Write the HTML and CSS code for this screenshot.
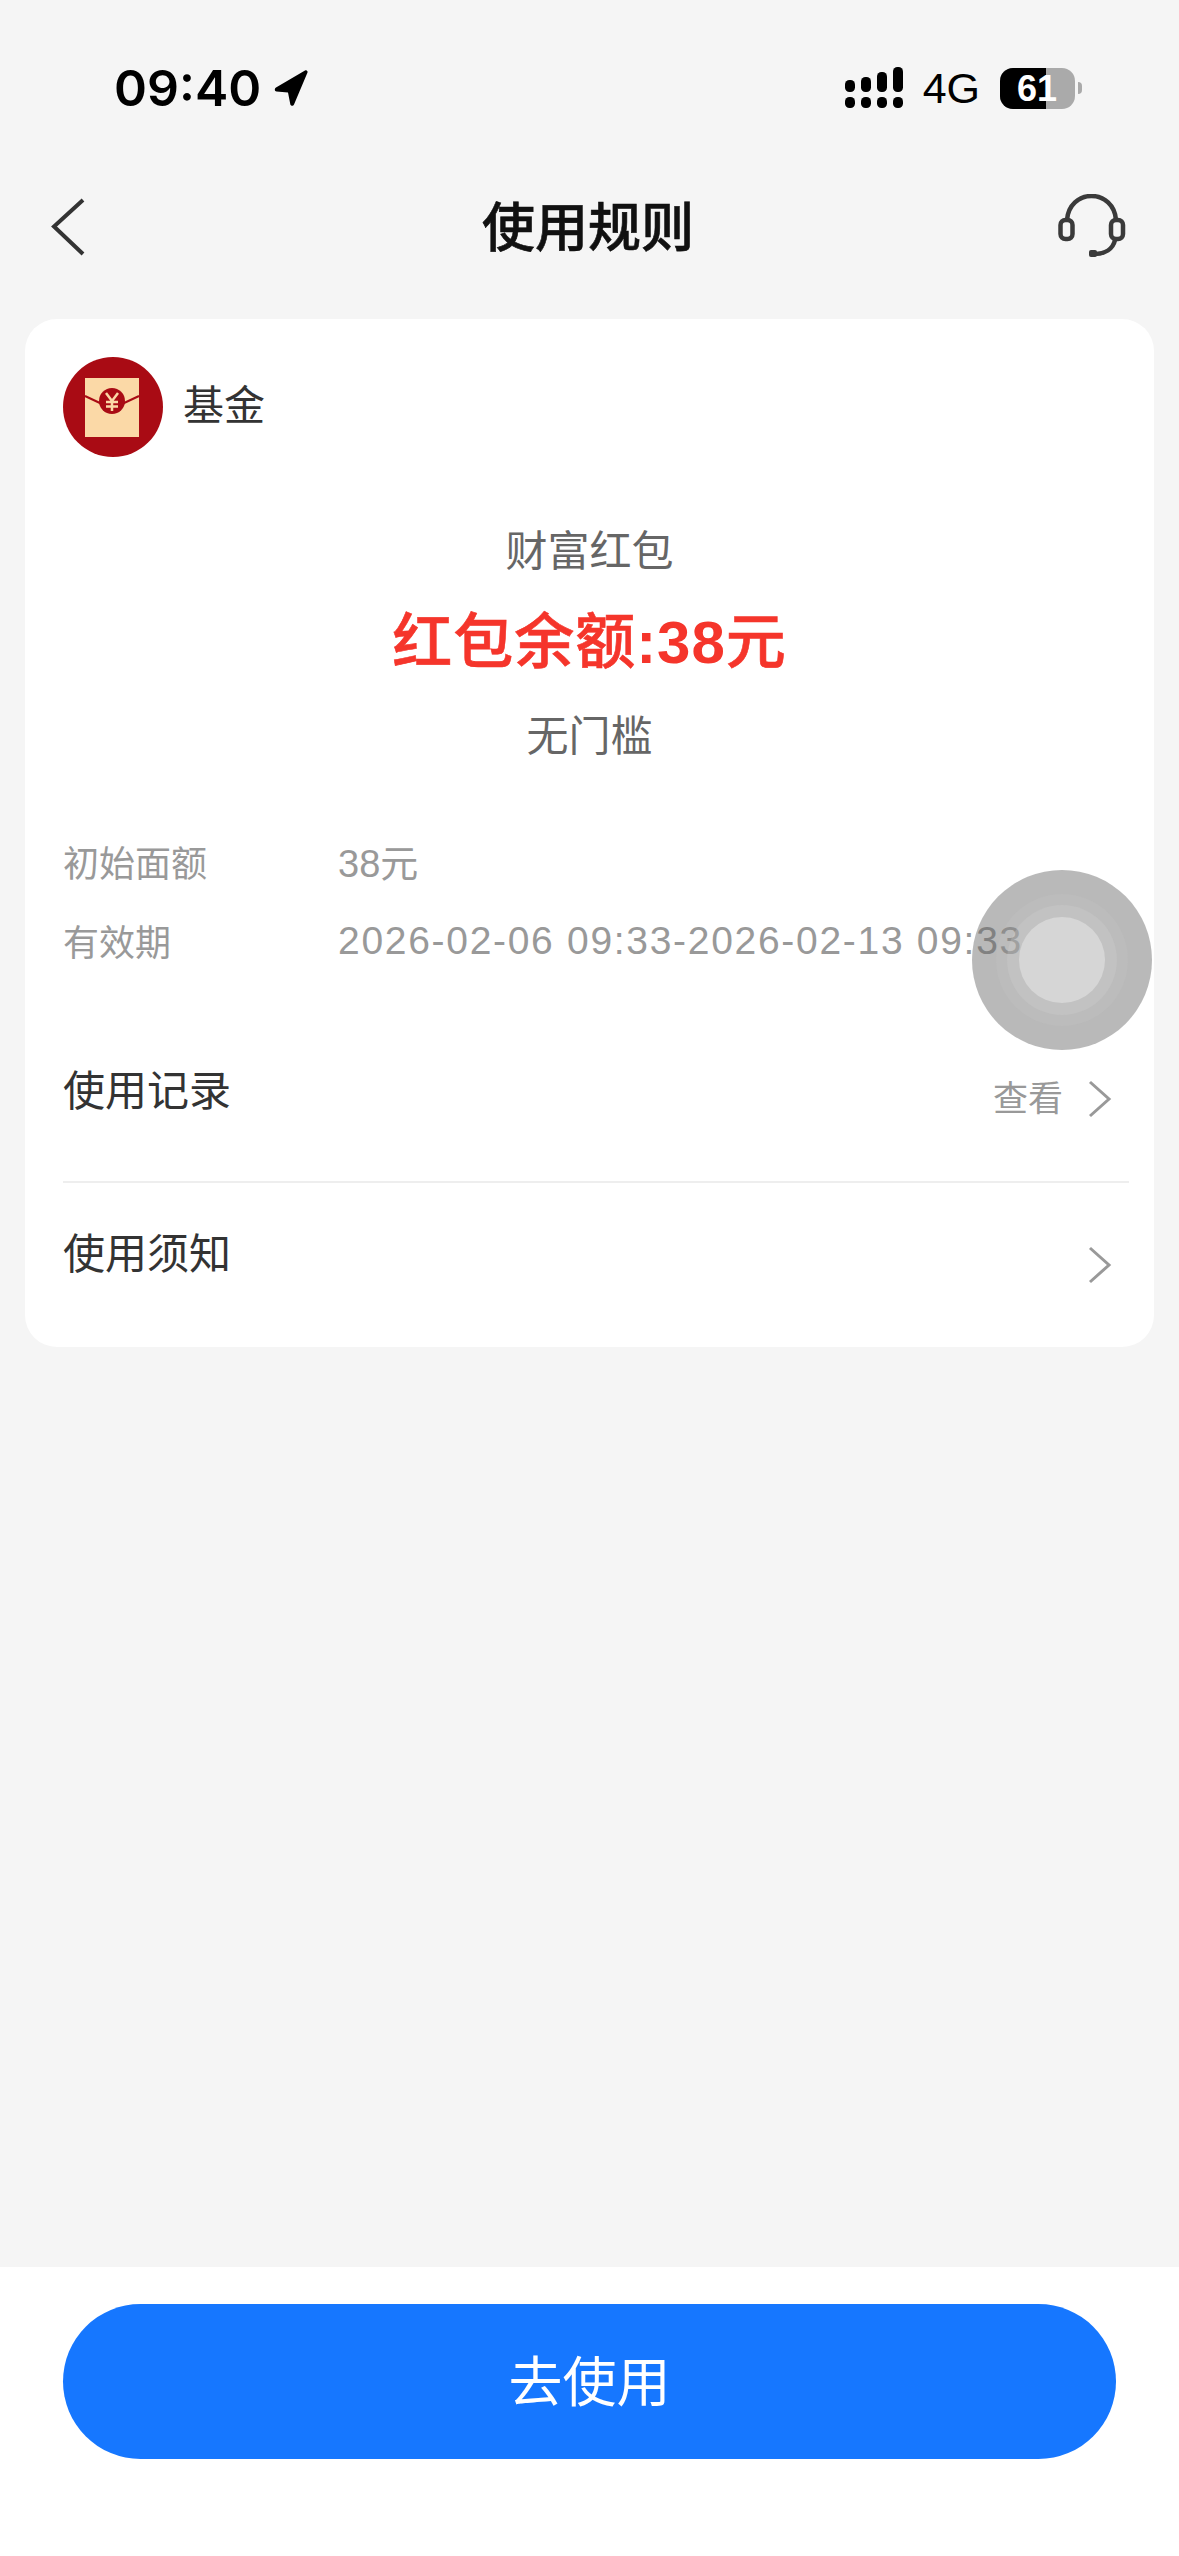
FILE: index.html
```html
<!DOCTYPE html>
<html lang="zh-CN">
<head>
    <meta charset="UTF-8">
    <meta name="viewport" content="width=device-width, initial-scale=1.0">
    <title>使用规则</title>
    <link rel="stylesheet" href="styles.css">
</head>
<body>
    <div class="page">
        <div class="status-bar">
            <div class="status-left">
                <span class="time">09:40</span>
                <svg class="loc-icon" width="36" height="40" viewBox="0 0 36 40">
                    <path d="M3 19.500 32 2.500c1.500-.8 3 .4 2.500 2L21 36.500c-.7 1.800-3.300 1.700-3.700-.2L15 24.500 3.500 23.500c-2-.2-2.300-3-.5-4z" fill="#000"/>
                </svg>
            </div>
            <div class="status-right">
                <svg class="signal-icon" width="58" height="42" viewBox="0 0 58 42">
                    <g fill="#000">
                        <rect x="0" y="13" width="10" height="12" rx="4.500"/>
                        <rect x="16" y="10" width="10" height="15" rx="4.500"/>
                        <rect x="32" y="5" width="10" height="20" rx="4.500"/>
                        <rect x="48" y="0" width="10" height="25" rx="4.500"/>
                        <rect x="0" y="30" width="10" height="11" rx="4.500"/>
                        <rect x="16" y="30" width="10" height="11" rx="4.500"/>
                        <rect x="32" y="30" width="10" height="11" rx="4.500"/>
                        <rect x="48" y="30" width="10" height="11" rx="4.500"/>
                    </g>
                </svg>
                <span class="net">4G</span>
                <div class="battery">
                    <div class="battery-body">
                        <div class="battery-fill"></div>
                        <span class="battery-num">61</span>
                    </div>
                    <div class="battery-cap"></div>
                </div>
            </div>
        </div>

        <div class="nav">
            <div class="nav-side">
                <svg class="back-icon" width="36" height="58" viewBox="0 0 36 58">
                    <path d="M33 2 4 28.500 33 56" fill="none" stroke="#333" stroke-width="4"/>
                </svg>
            </div>
            <div class="nav-title">使用规则</div>
            <div class="nav-side nav-side-right">
                <svg class="service-icon" width="68" height="66" viewBox="0 0 68 66">
                    <g fill="none" stroke="#3a3a3a" stroke-width="4.500">
                        <path d="M9 26C10 11 21 2 33.500 2S57 11 58 26"/>
                        <rect x="2.500" y="26" width="12" height="19" rx="5"/>
                        <rect x="53" y="26" width="12" height="19" rx="5"/>
                        <path d="M57 46c-2 9-10 14-21 14"/>
                    </g>
                    <rect x="31" y="56" width="8" height="7" rx="2" fill="#3a3a3a"/>
                </svg>
            </div>
        </div>

        <div class="card">
            <div class="product">
                <svg class="product-icon" width="100" height="100" viewBox="0 0 100 100">
                    <circle cx="50" cy="50" r="50" fill="#a90b14"/>
                    <rect x="22" y="21" width="54" height="59" fill="#fbd9a7"/>
                    <path d="M22 39 39 47M76 39 59 47" stroke="#a90b14" stroke-width="2" fill="none"/>
                    <circle cx="49" cy="44" r="13" fill="#a90b14"/>
                    <path d="M43 36 49 44 55 36M49 44V54M43 45H55M43 49.500H55" stroke="#fbd9a7" stroke-width="2.500" fill="none"/>
                </svg>
                <span class="product-name">基金</span>
            </div>

            <div class="summary">
                <div class="summary-type">财富红包</div>
                <div class="summary-amount">红包余额<span class="amount-num">:38</span>元</div>
                <div class="summary-limit">无门槛</div>
            </div>

            <div class="info">
                <div class="info-row">
                    <span class="info-label">初始面额</span>
                    <span class="info-value">38元</span>
                </div>
                <div class="info-row">
                    <span class="info-label">有效期</span>
                    <span class="info-value info-date">2026-02-06 09:33-2026-02-13 09:33</span>
                </div>
            </div>

            <div class="link-row link-row-first">
                <span class="link-title">使用记录</span>
                <div class="link-right">
                    <span class="link-hint">查看</span>
                    <svg class="chevron" width="24" height="38" viewBox="0 0 24 38">
                        <path d="M2 2 21 19 2 36" fill="none" stroke="#999" stroke-width="3"/>
                    </svg>
                </div>
            </div>
            <div class="link-row">
                <span class="link-title">使用须知</span>
                <div class="link-right link-right-low">
                    <svg class="chevron" width="24" height="38" viewBox="0 0 24 38">
                        <path d="M2 2 21 19 2 36" fill="none" stroke="#999" stroke-width="3"/>
                    </svg>
                </div>
            </div>
        </div>

        <div class="spacer"></div>

        <div class="bottom-bar">
            <button class="use-btn">去使用</button>
        </div>

        <!-- system assistive touch, floats over the card -->
        <div class="touch">
            <div class="touch-ring1">
                <div class="touch-ring2">
                    <div class="touch-dot"></div>
                </div>
            </div>
        </div>
    </div>
</body>
</html>
```

FILE: styles.css
```css
* {
    box-sizing: border-box;
}
body {
    margin: 0;
    background: #f5f5f5;
    font-family: "Liberation Sans", "Noto Sans CJK SC", sans-serif;
}
.page {
    position: relative;
    width: 1179px;
    height: 2556px;
    display: flex;
    flex-direction: column;
    overflow: hidden;
}

/* status bar */
.status-bar {
    height: 160px;
    padding: 63px 97px 0 114px;
    display: flex;
    justify-content: space-between;
    align-items: flex-start;
}
.status-left {
    display: flex;
    align-items: center;
    gap: 12px;
}
.time {
    font-family: Inter, "Liberation Sans", sans-serif;
    font-size: 50px;
    line-height: 50px;
    font-weight: 600;
    color: #000;
}
.status-right {
    display: flex;
    align-items: center;
    margin-top: 4px;
}
.net {
    margin-left: 20px;
    font-size: 43px;
    line-height: 42px;
    color: #000;
}
.battery {
    margin-left: 20px;
    display: flex;
    align-items: center;
    gap: 3px;
}
.battery-body {
    position: relative;
    width: 75px;
    height: 41px;
    border-radius: 13px;
    background: #aaa;
    overflow: hidden;
}
.battery-fill {
    width: 46px;
    height: 41px;
    background: #000;
}
.battery-num {
    position: absolute;
    left: 17px;
    top: 0;
    font-size: 36px;
    line-height: 41px;
    font-weight: bold;
    color: #fff;
}
.battery-cap {
    width: 4px;
    height: 12px;
    border-radius: 0 4px 4px 0;
    background: #aaa;
}

/* nav */
.nav {
    height: 159px;
    padding: 0 53px 26px 50px;
    display: grid;
    grid-template-columns: 1fr auto 1fr;
    align-items: center;
}
.nav-side {
    display: flex;
    align-items: center;
}
.nav-side-right {
    justify-content: flex-end;
}
.nav-title {
    font-size: 53px;
    line-height: 60px;
    font-weight: 500;
    color: #111;
    -webkit-text-stroke: 0.6px #111;
    margin-top: 4px;
}

/* card */
.card {
    margin: 0 25px;
    height: 1028px;
    padding: 38px 25px 0 38px;
    background: #fff;
    border-radius: 32px;
}
.product {
    display: flex;
    align-items: center;
    gap: 20px;
}
.product-name {
    font-size: 41px;
    line-height: 50px;
    margin-bottom: 2px;
    color: #333;
}
.summary {
    margin-top: 65px;
    margin-right: 13px;
    text-align: center;
}
.summary-type {
    font-size: 42px;
    line-height: 60px;
    color: #666;
}
.summary-amount {
    margin-top: 23px;
    font-size: 60px;
    line-height: 76px;
    font-weight: 500;
    letter-spacing: 1px;
    color: #f5352b;
    -webkit-text-stroke: 0.6px #f5352b;
}
.amount-num {
    font-weight: bold;
    -webkit-text-stroke: 0;
}
.summary-limit {
    margin-top: 26px;
    font-size: 42px;
    line-height: 60px;
    color: #666;
}
.info {
    margin-top: 54px;
}
.info-row {
    display: flex;
    height: 79px;
    align-items: center;
    font-size: 36px;
}
.info-label {
    width: 275px;
    color: #999;
}
.info-value {
    font-size: 38px;
    color: #999;
    white-space: nowrap;
}
.info-date {
    font-size: 39px;
    letter-spacing: 1.7px;
    padding-top: 2px;
}

/* links */
.link-row {
    height: 164px;
    display: flex;
    justify-content: space-between;
    align-items: flex-start;
    padding-top: 42px;
}
.link-row-first {
    margin-top: 49px;
    border-bottom: 2px solid #eee;
    padding-top: 34px;
    height: 155px;
}
.link-title {
    font-size: 42px;
    line-height: 60px;
    color: #333;
}
.link-right {
    display: flex;
    align-items: center;
    gap: 25px;
    padding: 18px 17px 0 0;
}
.link-right-low {
    padding-top: 21px;
}
.link-hint {
    font-size: 35px;
    line-height: 38px;
    color: #999;
}

.spacer {
    flex: 1;
}

/* bottom */
.bottom-bar {
    height: 289px;
    padding: 37px 63px 0;
    background: #fff;
}
.use-btn {
    display: block;
    width: 1053px;
    height: 155px;
    padding: 0 0 6px;
    border: none;
    border-radius: 78px;
    background: #1677ff;
    color: #fff;
    font-family: inherit;
    font-size: 54px;
}

/* assistive touch */
.touch {
    position: absolute;
    left: 972px;
    top: 870px;
    width: 180px;
    height: 180px;
    border-radius: 50%;
    background: rgba(100, 100, 100, 0.45);
    display: flex;
    align-items: center;
    justify-content: center;
}
.touch-ring1 {
    width: 132px;
    height: 132px;
    border-radius: 50%;
    background: rgba(200, 200, 200, 0.2);
    display: flex;
    align-items: center;
    justify-content: center;
}
.touch-ring2 {
    width: 110px;
    height: 110px;
    border-radius: 50%;
    background: rgba(210, 210, 210, 0.25);
    display: flex;
    align-items: center;
    justify-content: center;
}
.touch-dot {
    width: 86px;
    height: 86px;
    border-radius: 50%;
    background: #d6d6d6;
}
```
